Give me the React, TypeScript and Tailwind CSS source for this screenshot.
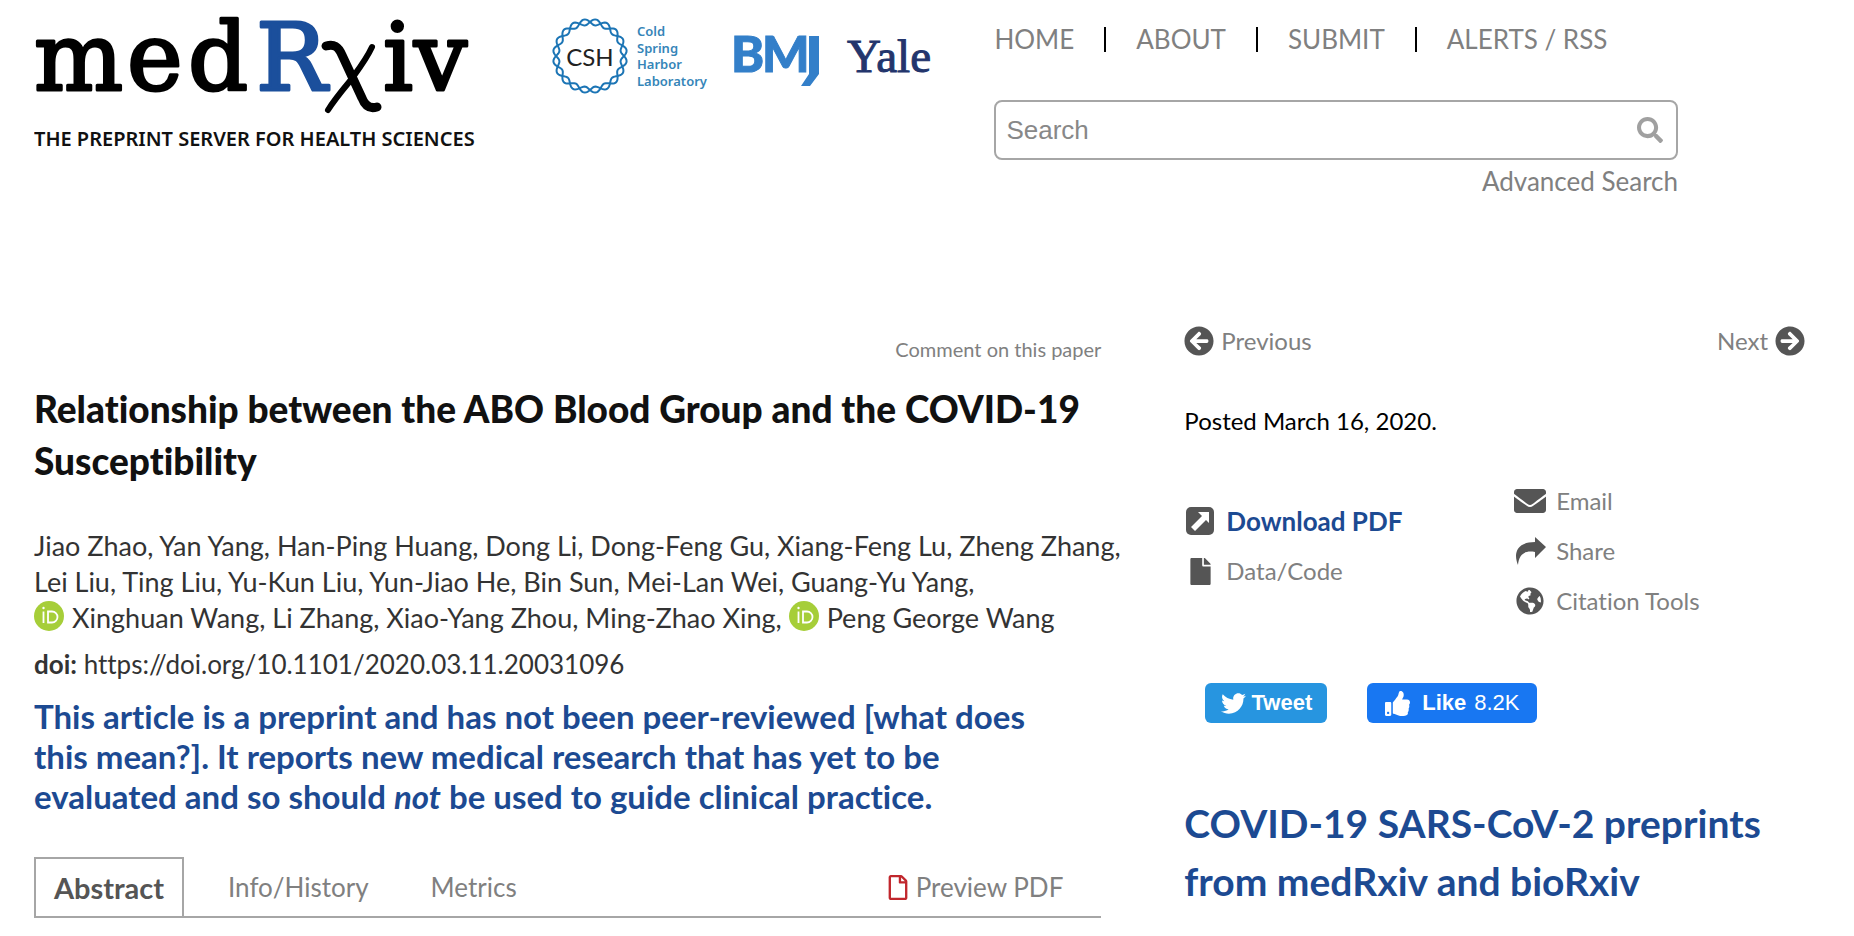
import type { ReactNode } from "react"
import {
  FaArrowCircleLeft,
  FaArrowCircleRight,
  FaEnvelope,
  FaFile,
  FaGlobeAmericas,
  FaRegFile,
  FaSearch,
  FaThumbsUp,
  FaTwitter,
} from "react-icons/fa"

const navLinks = ["HOME", "ABOUT", "SUBMIT", "ALERTS / RSS"]

const authorRows = [
  [
    { name: "Jiao Zhao" },
    { name: "Yan Yang" },
    { name: "Han-Ping Huang" },
    { name: "Dong Li" },
    { name: "Dong-Feng Gu" },
    { name: "Xiang-Feng Lu" },
    { name: "Zheng Zhang" },
  ],
  [
    { name: "Lei Liu" },
    { name: "Ting Liu" },
    { name: "Yu-Kun Liu" },
    { name: "Yun-Jiao He" },
    { name: "Bin Sun" },
    { name: "Mei-Lan Wei" },
    { name: "Guang-Yu Yang" },
  ],
  [
    { name: "Xinghuan Wang", orcid: true },
    { name: "Li Zhang" },
    { name: "Xiao-Yang Zhou" },
    { name: "Ming-Zhao Xing" },
    { name: "Peng George Wang", orcid: true, last: true },
  ],
]

// One strand of the helix ring around the CSH letters
function strand(phase: number) {
  const points = []
  for (let i = 0; i <= 360; i += 2) {
    const a = (i * Math.PI) / 180
    const r = 34 + 3 * Math.sin(a * 10 + phase)
    points.push(`${(38 + r * Math.cos(a)).toFixed(2)},${(38 + r * Math.sin(a)).toFixed(2)}`)
  }
  return points.join(" ")
}

function Wordmark() {
  return (
    <a href="#" aria-label="medRxiv" className="block w-[450px] shrink-0">
      <svg viewBox="0 0 450 156" className="block w-full">
        <g fontFamily="DejaVu Serif, serif" fontSize="94" stroke="#000" strokeWidth="3" strokeLinejoin="round">
          <text x="0" y="90">m</text>
          <text x="93" y="90">e</text>
          <text x="154" y="90">d</text>
          <text x="222" y="90" fill="#1b4f9c" stroke="#1b4f9c">R</text>
          <text x="349" y="90">i</text>
          <text x="380" y="90">v</text>
        </g>
        <path d="M292 46c8-2 12 0 16 9l20 43c3 8 8 11 15 9" fill="none" stroke="#000" strokeWidth="9" strokeLinecap="round" />
        <path d="M338 47c-6 13-14 23-22 34-10 12-17 21-22 29" fill="none" stroke="#000" strokeWidth="6" strokeLinecap="round" />
        <text x="0" y="146" fontFamily="Noto Sans, sans-serif" fontWeight="600" fontSize="20" fill="#111">
          THE PREPRINT SERVER FOR HEALTH SCIENCES
        </text>
      </svg>
    </a>
  )
}

function Partners() {
  return (
    <div className="flex items-start">
      <svg viewBox="0 0 160 76" className="block h-[76px] w-[160px]" role="img" aria-label="Cold Spring Harbor Laboratory">
        <polyline points={strand(0)} fill="none" stroke="#1c75b5" strokeWidth="2" />
        <polyline points={strand(Math.PI)} fill="none" stroke="#1c75b5" strokeWidth="2" />
        <text x="38" y="48" textAnchor="middle" fontFamily="Lato, sans-serif" fontSize="24" fill="#222">CSH</text>
        <g fontFamily="Noto Sans, sans-serif" fontWeight="600" fontSize="13" fill="#3585b8">
          <text x="85" y="18">Cold</text>
          <text x="85" y="35">Spring</text>
          <text x="85" y="51">Harbor</text>
          <text x="85" y="68">Laboratory</text>
        </g>
      </svg>
      <svg viewBox="0 0 90 76" className="ml-[20px] block h-[76px] w-[90px]" role="img" aria-label="BMJ">
        <g fontFamily="Lato, sans-serif" fontWeight="900" fontSize="50" fill="#337fc9" stroke="#337fc9">
          <text x="-1" y="54">B</text>
          <text x="30" y="54">M</text>
        </g>
        <path d="M77 18h10v38l-9 12h-9l8-12z" fill="#337fc9" />
      </svg>
      <svg viewBox="0 0 90 76" className="ml-[20px] block h-[76px] w-[90px]" role="img" aria-label="Yale">
        <text x="5" y="54" fontFamily="Liberation Serif, serif" fontSize="47" fill="#23356c" stroke="#23356c">Yale</text>
      </svg>
    </div>
  )
}

function Orcid() {
  return (
    <svg viewBox="0 0 30 30" className="mr-[8px] inline-block size-[30px] align-[-3px]" role="img" aria-label="ORCID">
      <circle cx="15" cy="15" r="15" fill="#a6ce39" />
      <path d="M9.500 10.500v11.500M14 10.500h4a5 5 0 0 1 0 11h-4z" fill="none" stroke="#fff" strokeWidth="1.800" />
      <circle cx="9.500" cy="7" r="1.200" fill="#fff" />
    </svg>
  )
}

function ShareIcon() {
  return (
    <svg viewBox="0 0 32 30" className="h-[30px] w-[32px]" aria-hidden="true">
      <path d="M21 1l11 10-11 11v-6C11 14 5 18 4 29 -1 17 3 6 21 6z" fill="currentColor" />
    </svg>
  )
}

function DownloadIcon() {
  return (
    <svg viewBox="0 0 28 28" className="size-[28px]" aria-hidden="true">
      <rect width="28" height="28" rx="5" fill="currentColor" />
      <path d="M12 5h11v11l-3-3-11 11-4-4 11-11z" fill="#fff" />
    </svg>
  )
}

function ToolLink({ icon, children, bold }: { icon: ReactNode; children: ReactNode; bold?: boolean }) {
  return (
    <a href="#" className="flex h-[50px] items-center gap-[10px]">
      <span className="flex w-8 justify-center text-[#555]">{icon}</span>
      <span className={bold ? "text-[26px] font-bold text-[#1c4a92]" : ""}>{children}</span>
    </a>
  )
}

function Header() {
  return (
    <header className="grid h-[310px] grid-cols-[961fr_684fr] pr-[176px] pl-[34px]">
      <div className="flex items-start">
        <Wordmark />
        <div className="ml-[68px] pt-[18px]">
          <Partners />
        </div>
      </div>
      <div className="pt-[21px] text-[26px] leading-[36px] text-[#808080]">
        <nav className="flex items-center gap-[30px]">
          {navLinks.map((label, i) => (
            <div key={label} className="flex items-center gap-[30px]">
              {i > 0 && <span className="h-[25px] w-[2px] bg-black" />}
              <a href="#">{label}</a>
            </div>
          ))}
        </nav>
        <form className="mt-[43px] flex h-[60px] items-center rounded-lg border-2 border-[#a6a6a6] pr-[13px] pl-[10px]">
          <input
            type="search"
            aria-label="Search"
            placeholder="Search"
            className="min-w-0 flex-1 font-['Liberation_Sans',sans-serif] text-[26px] outline-none placeholder:text-[#888]"
          />
          <button type="button" aria-label="Submit search">
            <FaSearch className="size-[26px] text-[#a0a0a0]" />
          </button>
        </form>
        <a href="#" className="mt-[3px] block text-right">Advanced Search</a>
      </div>
    </header>
  )
}

function Article() {
  return (
    <article>
      <a href="#" className="mt-[23px] block text-right text-[20px] leading-[32px] text-[#808080]">Comment on this paper</a>
      <h1 className="mt-[18px] text-[37px] leading-[52px] font-black text-[#111]">
        <span className="block">Relationship between the ABO Blood Group and the COVID-19</span>
        <span className="block">Susceptibility</span>
      </h1>
      <div className="mt-[41px] text-[27px] leading-[36px] whitespace-nowrap">
        {authorRows.map((row, i) => (
          <div key={i}>
            {row.map((author) => (
              <span key={author.name}>
                {author.orcid && <Orcid />}
                {author.name}
                {!author.last && ", "}
              </span>
            ))}
          </div>
        ))}
      </div>
      <p className="mt-[10px] text-[26px] leading-[36px]">
        <strong>doi:</strong> https://doi.org/10.1101/2020.03.11.20031096
      </p>
      <p className="mt-[14px] text-[33px] leading-[40px] font-bold whitespace-nowrap text-[#1c4a92]">
        <span className="block">This article is a preprint and has not been peer-reviewed [<a href="#">what does</a></span>
        <span className="block"><a href="#">this mean?</a>]. It reports new medical research that has yet to be</span>
        <span className="block">evaluated and so should <em>not</em> be used to guide clinical practice.</span>
      </p>
      <nav className="mt-[42px] flex h-[60px] items-center border-b-2 border-[#a6a6a6] text-[26px] text-[#808080]">
        <a href="#" className="flex h-[60px] w-[150px] items-center justify-center border-2 border-b-0 border-[#a6a6a6] text-[29px] font-bold text-[#555]">Abstract</a>
        <a href="#" className="ml-[44px]">Info/History</a>
        <a href="#" className="ml-[62px]">Metrics</a>
        <a href="#" className="mr-[38px] ml-auto flex items-center gap-[8px]">
          <FaRegFile className="h-[25px] w-[20px] text-[#c1272d]" />
          Preview PDF
        </a>
      </nav>
    </article>
  )
}

function Sidebar() {
  return (
    <aside className="text-[24px] leading-[32px] text-[#808080]">
      <div className="mt-[15px] flex justify-between">
        <a href="#" className="flex items-center gap-[7px]">
          <FaArrowCircleLeft className="size-[30px] text-[#555]" />
          Previous
        </a>
        <a href="#" className="flex items-center gap-[7px]">
          Next
          <FaArrowCircleRight className="size-[30px] text-[#555]" />
        </a>
      </div>
      <p className="mt-[48px] text-black">Posted March 16, 2020.</p>
      <div className="mt-[39px] grid grid-cols-[330fr_291fr]">
        <div className="pt-[20px]">
          <ToolLink bold icon={<DownloadIcon />}>Download PDF</ToolLink>
          <ToolLink icon={<FaFile className="size-[27px]" />}>Data/Code</ToolLink>
        </div>
        <div>
          <ToolLink icon={<FaEnvelope className="size-[32px]" />}>Email</ToolLink>
          <ToolLink icon={<ShareIcon />}>Share</ToolLink>
          <ToolLink icon={<FaGlobeAmericas className="size-[28px]" />}>Citation Tools</ToolLink>
        </div>
      </div>
      <div className="mt-[57px] flex items-center gap-10 pl-[21px] font-['Liberation_Sans',sans-serif] text-[22px] text-white">
        <button className="flex h-10 w-[122px] items-center justify-center gap-[6px] rounded-md bg-[#2795e0] font-bold">
          <FaTwitter className="size-[25px]" />
          Tweet
        </button>
        <button className="flex h-10 w-[170px] items-center justify-center rounded-md bg-[#1877f2]">
          <FaThumbsUp className="mr-[12px] size-[25px]" />
          <span className="mr-2 font-bold">Like</span>
          8.2K
        </button>
      </div>
      <h2 className="mt-[71px] text-[39px] leading-[58px] font-bold whitespace-nowrap text-[#1c4a92]">
        <span className="block">COVID-19 SARS-CoV-2 preprints</span>
        <span className="block">from medRxiv and bioRxiv</span>
      </h2>
    </aside>
  )
}

export default function App() {
  return (
    <div className="bg-white font-['Lato','Liberation_Sans',sans-serif] text-[#333] [font-variant-ligatures:none]">
      <Header />
      <main className="grid grid-cols-[minmax(0,1068fr)_minmax(0,621fr)] gap-[83px] pr-[49px] pl-[34px]">
        <Article />
        <Sidebar />
      </main>
    </div>
  )
}
